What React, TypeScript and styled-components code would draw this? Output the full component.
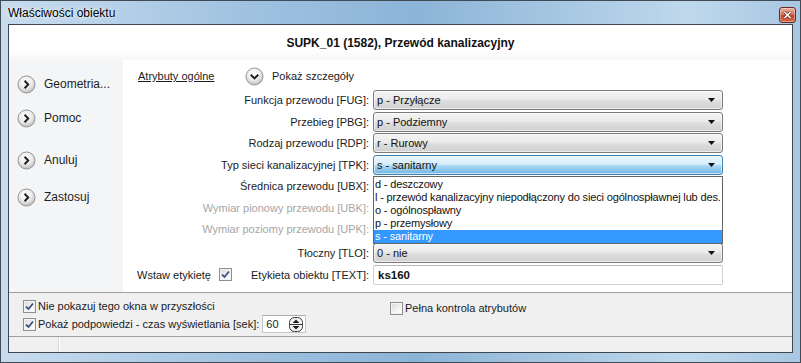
import React, { useId } from "react";
import styled, { createGlobalStyle, css } from "styled-components";

const Global = createGlobalStyle`
  html, body { margin: 0; padding: 0; background: #ffffff; }
  body { font-family: "Liberation Sans", Arial, sans-serif; font-size: 11px; color: #1b1b1b; }
  * { box-sizing: border-box; }
`;

const Window = styled.div`
  width: 801px;
  height: 363px;
  border: 1px solid #414b55;
  background: linear-gradient(90deg, #c8dcee 0%, #b6d0e8 14%, #9ec1e0 32%, #8cb4d7 52%, #a6c7e2 70%, #bfd8ec 86%, #a8c7e2 100%);
  padding: 0 7px 9px 7px;
  display: flex;
  flex-direction: column;
`;

const TitleBar = styled.div`
  height: 23px;
  display: flex;
  align-items: center;
  justify-content: space-between;
`;

const Title = styled.span`
  font-family: "Liberation Sans", Arial, sans-serif;
  font-size: 12px;
  color: #000;
  text-shadow: 0 0 6px rgba(255, 255, 255, 0.9), 0 0 2px rgba(255, 255, 255, 0.9);
  margin-top: 1px;
`;

const CloseBtn = styled.span`
  width: 17px;
  height: 16px;
  margin-right: -3px;
  margin-top: 5px;
  border: 1px solid #6e2a1c;
  border-radius: 3px;
  background: linear-gradient(#eab1a1 0%, #d9785f 45%, #c5452a 55%, #d56b50 100%);
  display: flex;
  align-items: center;
  justify-content: center;
  box-shadow: inset 0 0 0 1px rgba(255, 255, 255, 0.35);
`;

const Client = styled.div`
  flex: 1;
  border: 1px solid #3e464f;
  background: #f0f0f0;
  display: flex;
  flex-direction: column;
`;

const Header = styled.div`
  height: 35px;
  background: linear-gradient(#ffffff 0%, #ffffff 70%, #f6f6f6 100%);
  display: flex;
  align-items: center;
  justify-content: center;
  font-weight: bold;
  font-size: 12px;
  color: #111;
`;

const Body = styled.div`
  height: 232px;
  display: flex;
`;

const Nav = styled.div`
  width: 114px;
  background: #f4f5f7;
  display: flex;
  flex-direction: column;
`;

const NavItem = styled.div<{ $mt: number }>`
  height: 20px;
  margin-top: ${(p) => p.$mt}px;
  padding-left: 8px;
  display: flex;
  align-items: center;
  gap: 8px;
  font-size: 12px;
  color: #1e1e1e;
`;

const Main = styled.div`
  flex: 1;
  background: #ffffff;
  padding: 6px 0 0 14px;
  display: flex;
  flex-direction: column;
`;

const TopRow = styled.div`
  height: 20px;
  display: flex;
  align-items: center;
  padding-left: 1px;
`;

const SectionLink = styled.span`
  width: 107px;
  text-decoration: underline;
  color: #1b1b1b;
`;

const Details = styled.span`
  display: flex;
  align-items: center;
  gap: 8px;
`;

const Form = styled.div`
  margin-top: 3.25px;
  display: flex;
  flex-direction: column;
`;

const Row = styled.div<{ $mt?: number }>`
  height: 21.5px;
  margin-top: ${(p) => p.$mt ?? 0}px;
  display: grid;
  grid-template-columns: 232px 350px;
  column-gap: 4px;
  align-items: center;
`;

const Label = styled.span<{ $disabled?: boolean }>`
  text-align: right;
  white-space: nowrap;
  color: ${(p) => (p.$disabled ? "#a6a6a6" : "#1b1b1b")};
`;

const LabelGroup = styled.div`
  display: flex;
  align-items: center;
  justify-content: space-between;
`;

const Inline = styled.span`
  display: flex;
  align-items: center;
  gap: 8px;
`;

const Control = styled.div`
  position: relative;
  height: 20px;
`;

const Select = styled.div<{ $focused?: boolean }>`
  height: 20px;
  border: 1px solid #7a7a7a;
  border-radius: 3px;
  padding: 0 7px 0 3px;
  display: flex;
  align-items: center;
  justify-content: space-between;
  color: #111;
  background: linear-gradient(#f3f3f3 0%, #ebebeb 45%, #dddddd 55%, #d0d0d0 100%);
  box-shadow: inset 0 0 0 1px rgba(255, 255, 255, 0.6);
  ${(p) =>
    p.$focused &&
    css`
      border-color: #3c7fb1;
      background: linear-gradient(#eaf6fd 0%, #d7eefb 45%, #a9d8f4 55%, #72b5e2 100%);
    `}
`;

const TextBox = styled.div`
  height: 20px;
  border: 1px solid #d2d2d2;
  border-top-color: #b9b9b9;
  border-radius: 2px;
  background: #fff;
  padding-left: 4px;
  display: flex;
  align-items: center;
  font-weight: bold;
  font-size: 11.5px;
  color: #111;
`;

const DropList = styled.div`
  position: absolute;
  left: 0;
  top: calc(100% + 1px);
  width: 350px;
  border: 1px solid #646464;
  background: #fff;
  padding-top: 1px;
  z-index: 2;
`;

const DropItem = styled.div<{ $selected?: boolean }>`
  height: 13px;
  line-height: 13px;
  padding-left: 1px;
  white-space: nowrap;
  letter-spacing: -0.15px;
  color: ${(p) => (p.$selected ? "#ffffff" : "#111")};
  background: ${(p) => (p.$selected ? "#3399ff" : "transparent")};
`;

const Options = styled.div`
  height: 44px;
  border-top: 1px solid #a0a0a0;
  background: #f0f0f0;
  padding: 4px 0 0 14px;
  display: flex;
`;

const OptCol = styled.div<{ $w?: number; $pt?: number }>`
  width: ${(p) => (p.$w ? `${p.$w}px` : "auto")};
  padding-top: ${(p) => p.$pt ?? 0}px;
  display: flex;
  flex-direction: column;
`;

const OptRow = styled.label`
  height: 18px;
  display: flex;
  align-items: center;
  gap: 2px;
  white-space: nowrap;
`;

const Box = styled.span`
  width: 13px;
  height: 13px;
  border: 1px solid #8e8f8f;
  background: linear-gradient(135deg, #d8d8d8 0%, #f4f4f4 60%, #ffffff 100%);
  box-shadow: inset 0 0 0 1px #f4f4f4;
  display: inline-flex;
  align-items: center;
  justify-content: center;
  flex: none;
`;

const Spin = styled.div`
  width: 44px;
  height: 18px;
  margin-left: 1px;
  border: 1px solid #c5c8cc;
  border-top-color: #abadb3;
  background: #fff;
  padding: 0 2px 0 3px;
  display: flex;
  align-items: center;
  justify-content: space-between;
`;

const StatusBar = styled.div`
  height: 16px;
  border-top: 1px solid #a0a0a0;
  background: #f0f0f0;
  display: flex;
`;

const StatusPane = styled.div`
  width: 50px;
  border-right: 1px solid #d9d9d9;
  box-shadow: 1px 0 0 #ffffff;
`;

const CircleIcon: React.FC<{ dir: "right" | "down" }> = ({ dir }) => {
  const id = useId().replace(/:/g, "");
  return (
    <svg width="19" height="19" viewBox="0 0 19 19">
      <defs>
        <radialGradient id={id} cx="45%" cy="35%" r="65%">
          <stop offset="0" stopColor="#ffffff" />
          <stop offset="0.55" stopColor="#ededed" />
          <stop offset="1" stopColor="#bdbdbd" />
        </radialGradient>
      </defs>
      <circle cx="9.5" cy="9.5" r="8.5" fill={`url(#${id})`} stroke="#959595" />
      <path
        d={dir === "right" ? "M7.6 5.8 L11.2 9.5 L7.6 13.2" : "M5.8 7.8 L9.5 11.4 L13.2 7.8"}
        fill="none"
        stroke="#202020"
        strokeWidth="2"
      />
    </svg>
  );
};

const Arrow = () => (
  <svg width="7" height="4" viewBox="0 0 7 4">
    <path d="M0 0 H7 L3.5 4 Z" fill="#111" />
  </svg>
);

const Check: React.FC<{ checked?: boolean }> = ({ checked }) => (
  <Box>
    {checked && (
      <svg width="9" height="9" viewBox="0 0 9 9">
        <path d="M1 4.6 L3.5 7 L8 1.5" fill="none" stroke="#3a4e80" strokeWidth="1.8" />
      </svg>
    )}
  </Box>
);

const SpinButtons = () => (
  <svg width="14" height="15" viewBox="0 0 14 15">
    <rect x="0.5" y="0.5" width="13" height="14" rx="5" fill="#f4f4f4" stroke="#3b3b3b" />
    <line x1="1" y1="7.5" x2="13" y2="7.5" stroke="#3b3b3b" />
    <path d="M3.5 6 L7 2.5 L10.5 6 Z" fill="#202020" />
    <path d="M3.5 9 L7 12.5 L10.5 9 Z" fill="#202020" />
  </svg>
);

const CloseGlyph = () => (
  <svg width="9" height="8" viewBox="0 0 9 8">
    <path d="M1.5 1 L7.5 7 M7.5 1 L1.5 7" stroke="#6b2a1c" strokeWidth="3" />
    <path d="M1.5 1 L7.5 7 M7.5 1 L1.5 7" stroke="#ffffff" strokeWidth="1.6" />
  </svg>
);

const navItems = [
  { label: "Geometria...", mt: 14 },
  { label: "Pomoc", mt: 14 },
  { label: "Anuluj", mt: 22 },
  { label: "Zastosuj", mt: 17 },
];

const listItems = [
  "d - deszczowy",
  "l - przewód kanalizacyjny niepodłączony do sieci ogólnospławnej lub des.",
  "o - ogólnospławny",
  "p - przemysłowy",
  "s - sanitarny",
];

export default function App() {
  return (
    <>
      <Global />
      <Window>
        <TitleBar>
          <Title>Właściwości obiektu</Title>
          <CloseBtn>
            <CloseGlyph />
          </CloseBtn>
        </TitleBar>
        <Client>
          <Header>SUPK_01 (1582), Przewód kanalizacyjny</Header>
          <Body>
            <Nav>
              {navItems.map((n) => (
                <NavItem key={n.label} $mt={n.mt}>
                  <CircleIcon dir="right" />
                  <span>{n.label}</span>
                </NavItem>
              ))}
            </Nav>
            <Main>
              <TopRow>
                <SectionLink>Atrybuty ogólne</SectionLink>
                <Details>
                  <CircleIcon dir="down" />
                  <span>Pokaż szczegóły</span>
                </Details>
              </TopRow>
              <Form>
                <Row>
                  <Label>Funkcja przewodu [FUG]:</Label>
                  <Control>
                    <Select>
                      <span>p - Przyłącze</span>
                      <Arrow />
                    </Select>
                  </Control>
                </Row>
                <Row>
                  <Label>Przebieg [PBG]:</Label>
                  <Control>
                    <Select>
                      <span>p - Podziemny</span>
                      <Arrow />
                    </Select>
                  </Control>
                </Row>
                <Row>
                  <Label>Rodzaj przewodu [RDP]:</Label>
                  <Control>
                    <Select>
                      <span>r - Rurowy</span>
                      <Arrow />
                    </Select>
                  </Control>
                </Row>
                <Row>
                  <Label>Typ sieci kanalizacyjnej [TPK]:</Label>
                  <Control>
                    <Select $focused>
                      <span>s - sanitarny</span>
                      <Arrow />
                    </Select>
                    <DropList>
                      {listItems.map((t, i) => (
                        <DropItem key={t} $selected={i === listItems.length - 1}>
                          {t}
                        </DropItem>
                      ))}
                    </DropList>
                  </Control>
                </Row>
                <Row>
                  <Label>Średnica przewodu [UBX]:</Label>
                  <Control />
                </Row>
                <Row>
                  <Label $disabled>Wymiar pionowy przewodu [UBK]:</Label>
                  <Control />
                </Row>
                <Row>
                  <Label $disabled>Wymiar poziomy przewodu [UPK]:</Label>
                  <Control />
                </Row>
                <Row $mt={2.5}>
                  <Label>Tłoczny [TLO]:</Label>
                  <Control>
                    <Select>
                      <span>0 - nie</span>
                      <Arrow />
                    </Select>
                  </Control>
                </Row>
                <Row>
                  <LabelGroup>
                    <Inline>
                      <span>Wstaw etykietę</span>
                      <Check checked />
                    </Inline>
                    <Label>Etykieta obiektu [TEXT]:</Label>
                  </LabelGroup>
                  <Control>
                    <TextBox>ks160</TextBox>
                  </Control>
                </Row>
              </Form>
            </Main>
          </Body>
          <Options>
            <OptCol $w={367}>
              <OptRow>
                <Check checked />
                <span>Nie pokazuj tego okna w przyszłości</span>
              </OptRow>
              <OptRow>
                <Check checked />
                <span>Pokaż podpowiedzi - czas wyświetlania [sek]:</span>
                <Spin>
                  <span>60</span>
                  <SpinButtons />
                </Spin>
              </OptRow>
            </OptCol>
            <OptCol $pt={2}>
              <OptRow>
                <Check />
                <span>Pełna kontrola atrybutów</span>
              </OptRow>
            </OptCol>
          </Options>
          <StatusBar>
            <StatusPane />
          </StatusBar>
        </Client>
      </Window>
    </>
  );
}
